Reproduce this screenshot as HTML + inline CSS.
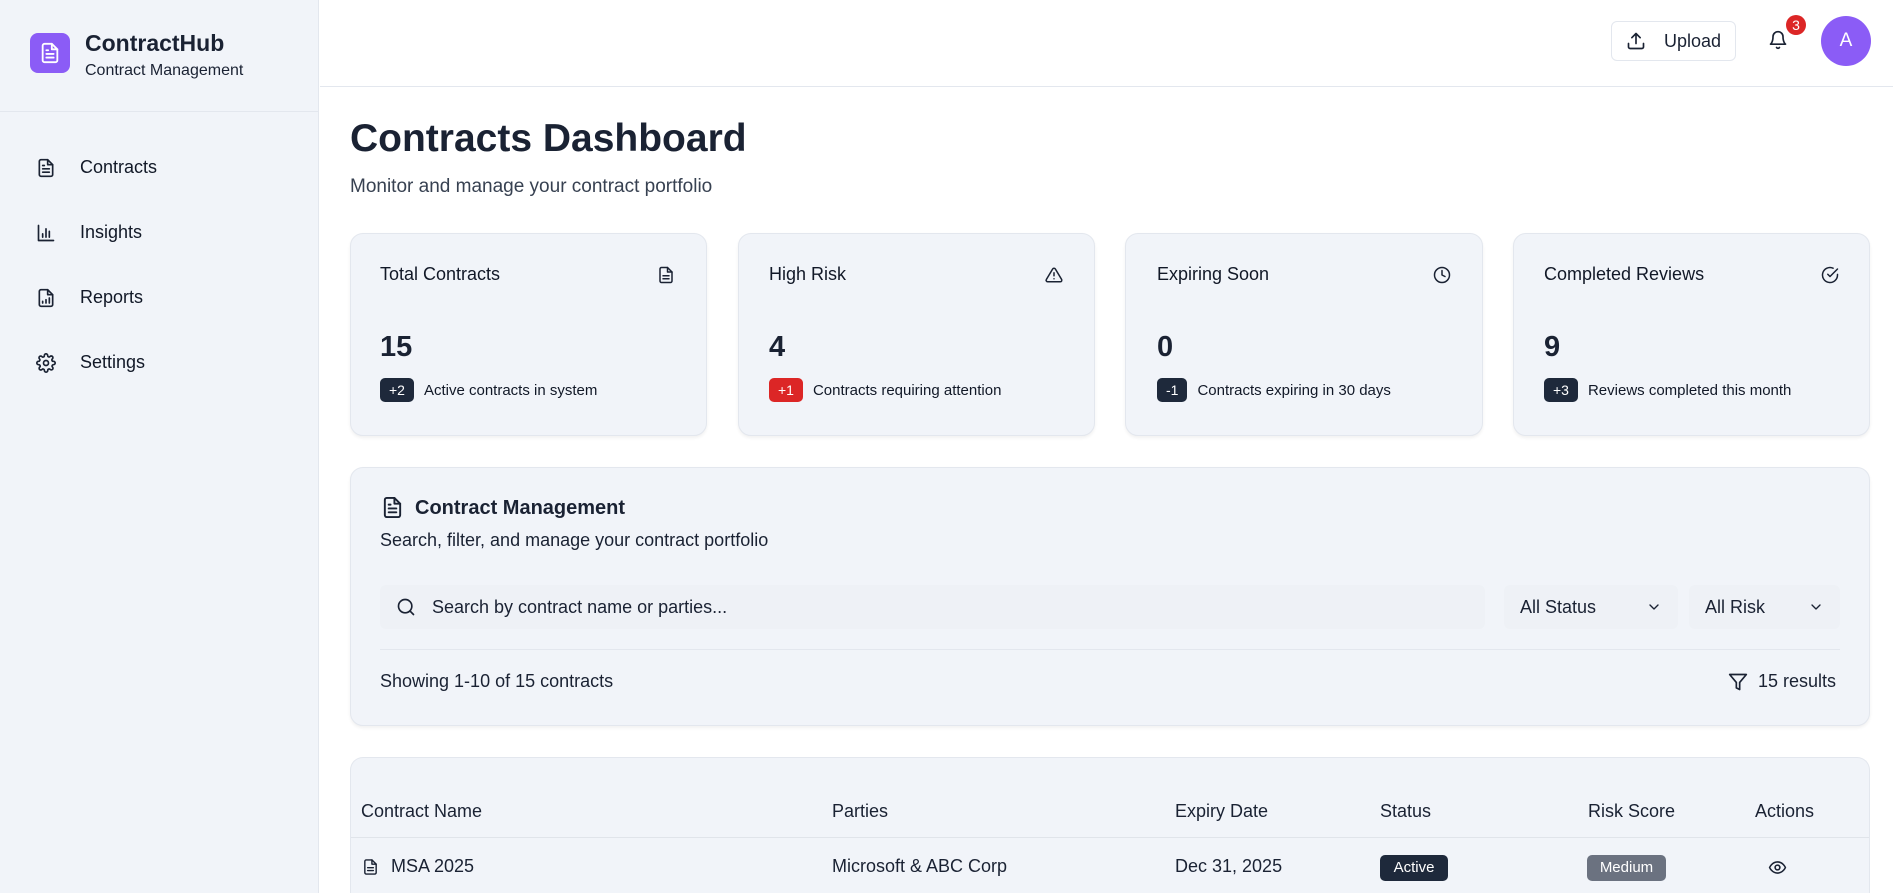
<!DOCTYPE html>
<html><head><meta charset="utf-8"><style>
*{box-sizing:border-box;margin:0;padding:0}
html,body{width:1893px;height:893px;overflow:hidden}
body{font-family:"Liberation Sans",sans-serif;color:#1a2233;background:#fff;position:relative}
.a{position:absolute}
.sb{left:0;top:0;width:319px;height:893px;background:#f1f4f9;border-right:1px solid #e3e7ee}
.nav{left:36px;display:flex;align-items:center;font-size:18px;color:#111827}
.nav svg{margin-right:24px}
.card{background:#f1f4f9;border:1px solid #e3e7ee;border-radius:13px;box-shadow:0 2px 3px rgba(0,0,0,.06)}
.ct{font-size:18px;color:#111827}
.num{font-size:29px;font-weight:bold}
.bd{display:inline-block;background:#1e293b;color:#fff;font-size:14px;border-radius:5px;padding:4px 9px;margin-right:10px}
.sm{font-size:15px;color:#111827}
svg{fill:none;stroke:#1a2233;stroke-width:2;stroke-linecap:round;stroke-linejoin:round}
</style></head><body>
<div class="a sb"></div>
<div class="a" style="left:0;top:111px;width:319px;border-top:1px solid #e3e7ee"></div>
<div class="a" style="left:30px;top:33px;width:40px;height:40px;border-radius:8px;background:#8b5cf6;display:flex;align-items:center;justify-content:center">
<svg width="22" height="22" viewBox="0 0 24 24" style="stroke:#fff"><path d="M14 2H6a2 2 0 0 0-2 2v16a2 2 0 0 0 2 2h12a2 2 0 0 0 2-2V8z"/><path d="M14 2v6h6M8 13h8M8 17h8M8 9h2"/></svg></div>
<div class="a" style="left:85px;top:30px;font-size:23px;font-weight:bold">ContractHub</div>
<div class="a" style="left:85px;top:62px;font-size:16px">Contract Management</div>
<div class="a nav" style="top:157px"><svg width="20" height="20" viewBox="0 0 24 24"><path d="M14 2H6a2 2 0 0 0-2 2v16a2 2 0 0 0 2 2h12a2 2 0 0 0 2-2V8z"/><path d="M14 2v6h6M8 13h8M8 17h8M8 9h2"/></svg>Contracts</div>
<div class="a nav" style="top:222px"><svg width="20" height="20" viewBox="0 0 24 24"><path d="M3 3v18h18M8 17v-4M12 17V7M16 17v-7"/></svg>Insights</div>
<div class="a nav" style="top:287px"><svg width="20" height="20" viewBox="0 0 24 24"><path d="M14 2H6a2 2 0 0 0-2 2v16a2 2 0 0 0 2 2h12a2 2 0 0 0 2-2V8z"/><path d="M14 2v6h6M8 18v-2M12 18v-4M16 18v-6"/></svg>Reports</div>
<div class="a nav" style="top:352px"><svg width="20" height="20" viewBox="0 0 24 24"><circle cx="12" cy="12" r="3"/><path d="M19.4 15a1.65 1.65 0 0 0 .33 1.82l.06.06a2 2 0 1 1-2.83 2.830l-.06-.06a1.65 1.65 0 0 0-2.82 1.17V21a2 2 0 1 1-4 0v-.09a1.65 1.65 0 0 0-2.82-1.170l-.06.06a2 2 0 1 1-2.83-2.830l.06-.06A1.65 1.65 0 0 0 3.26 14H3a2 2 0 1 1 0-4h.09a1.65 1.65 0 0 0 1.17-2.82l-.06-.06a2 2 0 1 1 2.83-2.830l.06.06A1.65 1.65 0 0 0 10 3.26V3a2 2 0 1 1 4 0v.09a1.65 1.65 0 0 0 2.82 1.17l.06-.06a2 2 0 1 1 2.83 2.830l-.06.06A1.65 1.65 0 0 0 20.74 10H21a2 2 0 1 1 0 4h-.09a1.65 1.65 0 0 0-1.51 1z"/></svg>Settings</div>

<div class="a" style="left:320px;top:86px;width:1573px;border-top:1px solid #e3e7ee"></div>
<div class="a" style="left:1611px;top:21px;width:125px;height:40px;border:1px solid #e3e7ee;border-radius:6px;display:flex;align-items:center;padding-left:14px;font-size:18px"><svg width="20" height="20" viewBox="0 0 24 24" style="margin-right:18px"><path d="M21 15v4a2 2 0 0 1-2 2H5a2 2 0 0 1-2-2v-4M17 8l-5-5-5 5M12 3v12"/></svg>Upload</div>
<svg class="a" style="left:1768px;top:30px" width="20" height="20" viewBox="0 0 24 24"><path d="M6 8a6 6 0 0 1 12 0c0 7 3 9 3 9H3s3-2 3-9M10.3 21a1.94 1.94 0 0 0 3.4 0"/></svg>
<div class="a" style="left:1786px;top:15px;width:20px;height:20px;border-radius:50%;background:#dc2626;color:#fff;font-size:14px;text-align:center;line-height:20px">3</div>
<div class="a" style="left:1821px;top:16px;width:50px;height:50px;border-radius:50%;background:#8b5cf6;color:#fff;font-size:19px;text-align:center;line-height:50px">A</div>

<div class="a" style="left:350px;top:117px;font-size:39px;font-weight:bold">Contracts Dashboard</div>
<div class="a" style="left:350px;top:176px;font-size:19px;color:#374151">Monitor and manage your contract portfolio</div>

<div class="a card" style="left:350px;top:233px;width:357px;height:203px"></div>
<div class="a card" style="left:738px;top:233px;width:357px;height:203px"></div>
<div class="a card" style="left:1125px;top:233px;width:358px;height:203px"></div>
<div class="a card" style="left:1513px;top:233px;width:357px;height:203px"></div>

<div class="a ct" style="left:380px;top:264px">Total Contracts</div>
<div class="a num" style="left:380px;top:331px">15</div>
<div class="a sm" style="left:380px;top:378px"><span class="bd">+2</span>Active contracts in system</div>
<svg class="a" style="left:657px;top:266px" width="18" height="18" viewBox="0 0 24 24"><path d="M14 2H6a2 2 0 0 0-2 2v16a2 2 0 0 0 2 2h12a2 2 0 0 0 2-2V8z"/><path d="M14 2v6h6M8 13h8M8 17h8"/></svg>

<div class="a ct" style="left:769px;top:264px">High Risk</div>
<div class="a num" style="left:769px;top:331px">4</div>
<div class="a sm" style="left:769px;top:378px"><span class="bd" style="background:#dc2626">+1</span>Contracts requiring attention</div>
<svg class="a" style="left:1045px;top:266px" width="18" height="18" viewBox="0 0 24 24"><path d="M10.3 3.9 1.8 18a2 2 0 0 0 1.7 3h17a2 2 0 0 0 1.7-3L13.7 3.9a2 2 0 0 0-3.4 0zM12 9v4M12 17h.01"/></svg>

<div class="a ct" style="left:1157px;top:264px">Expiring Soon</div>
<div class="a num" style="left:1157px;top:331px">0</div>
<div class="a sm" style="left:1157px;top:378px"><span class="bd">-1</span>Contracts expiring in 30 days</div>
<svg class="a" style="left:1433px;top:266px" width="18" height="18" viewBox="0 0 24 24"><circle cx="12" cy="12" r="10"/><path d="M12 6v6l4 2"/></svg>

<div class="a ct" style="left:1544px;top:264px">Completed Reviews</div>
<div class="a num" style="left:1544px;top:331px">9</div>
<div class="a sm" style="left:1544px;top:378px"><span class="bd">+3</span>Reviews completed this month</div>
<svg class="a" style="left:1821px;top:266px" width="18" height="18" viewBox="0 0 24 24"><path d="M22 11.1V12a10 10 0 1 1-5.9-9.1"/><path d="M22 4 12 14l-3-3"/></svg>

<div class="a card" style="left:350px;top:467px;width:1520px;height:259px"></div>
<svg class="a" style="left:381px;top:496px" width="23" height="23" viewBox="0 0 24 24"><path d="M14 2H6a2 2 0 0 0-2 2v16a2 2 0 0 0 2 2h12a2 2 0 0 0 2-2V8z"/><path d="M14 2v6h6M8 13h8M8 17h8M8 9h2"/></svg>
<div class="a" style="left:415px;top:497px;font-size:20px;font-weight:bold">Contract Management</div>
<div class="a" style="left:380px;top:530px;font-size:18px">Search, filter, and manage your contract portfolio</div>
<div class="a" style="left:380px;top:585px;width:1105px;height:44px;background:#eef1f6;border-radius:6px;display:flex;align-items:center;padding-left:16px;font-size:18px"><svg width="20" height="20" viewBox="0 0 24 24" style="margin-right:16px"><circle cx="11" cy="11" r="8"/><path d="m21 21-4.3-4.3"/></svg>Search by contract name or parties...</div>
<div class="a" style="left:1504px;top:585px;width:174px;height:44px;background:#eef1f6;border-radius:6px;display:flex;align-items:center;justify-content:space-between;padding:0 16px;font-size:18px">All Status<svg width="16" height="16" viewBox="0 0 24 24"><path d="m6 9 6 6 6-6"/></svg></div>
<div class="a" style="left:1689px;top:585px;width:151px;height:44px;background:#eef1f6;border-radius:6px;display:flex;align-items:center;justify-content:space-between;padding:0 16px;font-size:18px">All Risk<svg width="16" height="16" viewBox="0 0 24 24"><path d="m6 9 6 6 6-6"/></svg></div>
<div class="a" style="left:380px;top:649px;width:1460px;border-top:1px solid #e3e7ee"></div>
<div class="a" style="left:380px;top:671px;font-size:18px">Showing 1-10 of 15 contracts</div>
<div class="a" style="left:1728px;top:671px;font-size:18px;display:flex;align-items:center"><svg width="20" height="20" viewBox="0 0 24 24" style="margin-right:10px"><path d="M22 3H2l8 9.5V19l4 2v-8.5z"/></svg>15 results</div>

<div class="a" style="left:350px;top:757px;width:1520px;height:136px;background:#f1f4f9;border:1px solid #e3e7ee;border-bottom:none;border-radius:13px 13px 0 0"></div>
<div class="a" style="left:351px;top:837px;width:1518px;border-top:1px solid #e0e4ea"></div>
<div class="a" style="top:801px;left:0;width:1893px;font-size:18px">
<span class="a" style="left:361px">Contract Name</span><span class="a" style="left:832px">Parties</span><span class="a" style="left:1175px">Expiry Date</span><span class="a" style="left:1380px">Status</span><span class="a" style="left:1588px">Risk Score</span><span class="a" style="left:1755px">Actions</span></div>
<svg class="a" style="left:362px;top:858px" width="17" height="18" viewBox="0 0 24 24"><path d="M14 2H6a2 2 0 0 0-2 2v16a2 2 0 0 0 2 2h12a2 2 0 0 0 2-2V8z"/><path d="M14 2v6h6M8 13h8M8 17h8"/></svg>
<div class="a" style="top:856px;left:0;width:1893px;font-size:18px">
<span class="a" style="left:391px">MSA 2025</span><span class="a" style="left:832px">Microsoft &amp; ABC Corp</span><span class="a" style="left:1175px">Dec 31, 2025</span></div>
<div class="a" style="left:1380px;top:855px;width:68px;height:26px;background:#1e293b;color:#fff;border-radius:5px;font-size:15px;text-align:center;line-height:26px">Active</div>
<div class="a" style="left:1587px;top:855px;width:79px;height:26px;background:#6b7280;color:#fff;border-radius:5px;font-size:15px;text-align:center;line-height:26px">Medium</div>
<svg class="a" style="left:1768px;top:858px" width="19" height="19" viewBox="0 0 24 24"><path d="M2 12s3-7 10-7 10 7 10 7-3 7-10 7-10-7-10-7z"/><circle cx="12" cy="12" r="3"/></svg>
</body></html>
